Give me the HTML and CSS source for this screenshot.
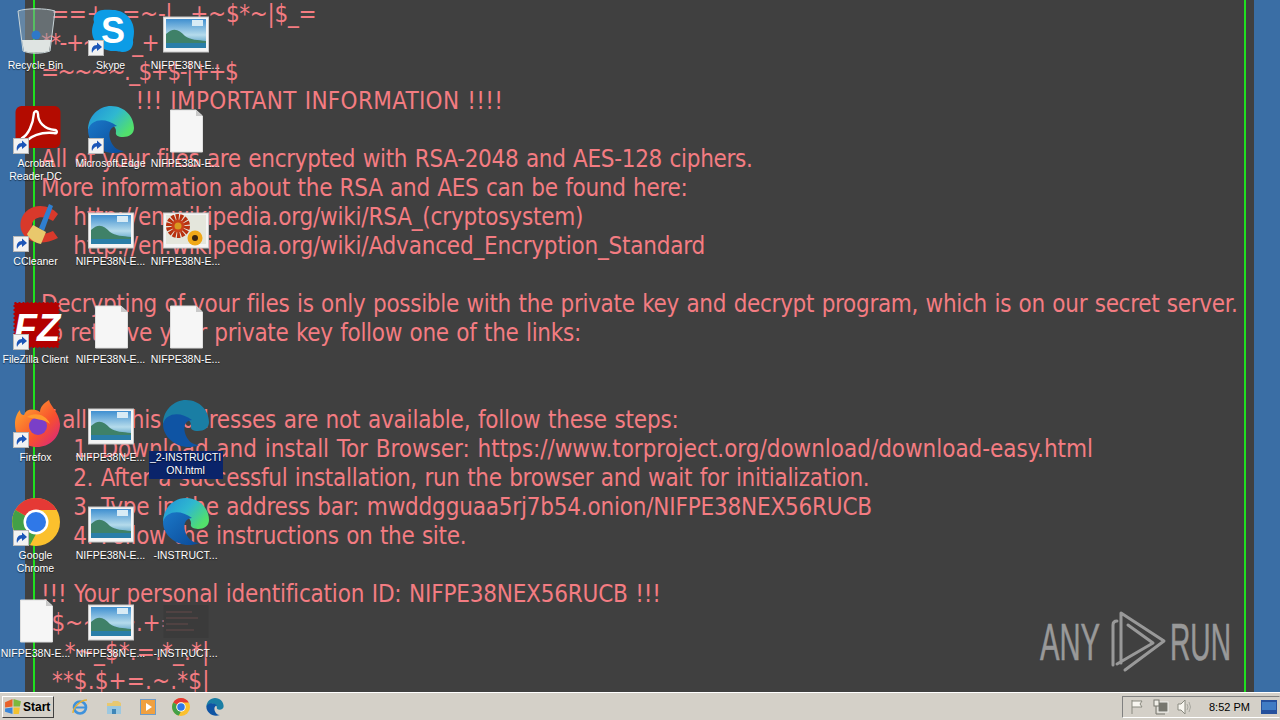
FILE: index.html
```html
<!DOCTYPE html>
<html lang="en">
<head>
<meta charset="utf-8">
<title>Desktop</title>
<link rel="stylesheet" href="styles.css">
</head>
<body>
<svg class="defs" width="0" height="0" aria-hidden="true">
  <defs>
    <linearGradient id="sky" x1="0" y1="0" x2="0" y2="1"><stop offset="0" stop-color="#3f8fd0"/><stop offset="0.55" stop-color="#b5dbeb"/><stop offset="1" stop-color="#2f86b5"/></linearGradient>
    <linearGradient id="edgeA" x1="0" y1="0" x2="1" y2="0.6"><stop offset="0" stop-color="#1f8fd8"/><stop offset="0.55" stop-color="#2fb8d0"/><stop offset="1" stop-color="#52e06c"/></linearGradient>
    <linearGradient id="edgeB" x1="0" y1="0" x2="1" y2="1"><stop offset="0" stop-color="#1a78c8"/><stop offset="1" stop-color="#0c4a98"/></linearGradient>
    <linearGradient id="fox" x1="0" y1="0" x2="1" y2="1"><stop offset="0" stop-color="#ffb52e"/><stop offset="0.6" stop-color="#f8502e"/><stop offset="1" stop-color="#d4208a"/></linearGradient>
    <symbol id="arrow" viewBox="0 0 16 16"><rect x="0.5" y="0.5" width="15" height="15" fill="#f2f2f2" stroke="#b8b8b8"/><path d="M4 13 C3 8 5 5 9 5 L9 2.5 L14 7 L9 11 L9 8.5 C7 8.5 5.500 10 4 13Z" fill="#1c56b8"/></symbol>
    <symbol id="photo" viewBox="0 0 48 48"><rect x="1.500" y="9" width="45" height="35" fill="#f4f4f4" stroke="#c8c8c8"/><rect x="4" y="11" width="40" height="29" fill="url(#sky)"/><path d="M4 26 C11 19 17 21 23 28 C28 32 36 32 44 33 L44 35 L4 35Z" fill="#3f8168"/><path d="M4 35 H44 V40 H4Z" fill="#2a7ea8"/><path d="M30 12 h11 v6 h-11z" fill="#d8ebf5"/></symbol>
    <symbol id="flower" viewBox="0 0 48 48"><rect x="1.500" y="9" width="45" height="35" fill="#f4f4f4" stroke="#c8c8c8"/><rect x="4" y="11" width="40" height="29" fill="#e4e6dc"/><circle cx="16" cy="22" r="9" fill="none" stroke="#b8300f" stroke-width="6" stroke-dasharray="3 1"/><circle cx="16" cy="22" r="6.500" fill="#c8401a"/><circle cx="16" cy="22" r="3.500" fill="#d89820"/><circle cx="33" cy="34" r="7.500" fill="#f0a818"/><circle cx="33" cy="34" r="3" fill="#3a2510"/></symbol>
    <symbol id="doc" viewBox="0 0 48 48"><path d="M8.500 4 H34 L40.500 10 V46 H8.500Z" fill="#f6f6f6" stroke="#dedede"/><path d="M34 4 V10 H40.500Z" fill="#c9c9c9"/></symbol>
    <symbol id="edge" viewBox="0 0 48 48"><path d="M1 24 C1 10 12 0 24 0 C38 0 47 11 47 22 C47 28 42 31 36 31 C31 31 28 29 29 26 C30 17 12 10 4 22Z" fill="url(#edgeA)"/><path d="M1 24 C4 13 18 11 30 20 C24 20 21 26 23 33 C25 40 30 45 37 45 C20 52 1 40 1 24Z" fill="url(#edgeB)"/></symbol>
    <symbol id="edgeFlat" viewBox="0 0 48 48"><path d="M1 24 C1 10 12 0 24 0 C38 0 47 11 47 22 C47 28 42 31 36 31 C31 31 28 29 29 26 C30 17 12 10 4 22Z" fill="#1a7ea4"/><path d="M1 24 C4 13 18 11 30 20 C24 20 21 26 23 33 C25 40 30 45 37 45 C20 52 1 40 1 24Z" fill="#0f54a4"/></symbol>
    <symbol id="chrome" viewBox="0 0 48 48"><circle cx="24" cy="24" r="24" fill="#fbc02d"/><path d="M24 0 A24 24 0 0 1 44.800 12 H24 A12 12 0 0 0 13.600 18 L3.200 12 A24 24 0 0 1 24 0Z" fill="#e53935"/><path d="M3.200 12 L13.600 18 A12 12 0 0 0 24 36 L18 46.900 A24 24 0 0 1 3.200 12Z" fill="#43a047"/><circle cx="24" cy="24" r="12.500" fill="#fff"/><circle cx="24" cy="24" r="10" fill="#2f78e8"/></symbol>
  </defs>
</svg>

<main class="window">
  <div class="frame">
<pre class="note"><span class="l1">==+_-=~-| _+~$*~|$_=</span>
<span class="sym">**-+~~~_+ </span>
<span class="sym">=~~~~._$+$-|++$</span>
<span class="heading">            !!! IMPORTANT INFORMATION !!!!</span>

All of your files are encrypted with RSA-2048 and AES-128 ciphers.
More information about the RSA and AES can be found here:
<span class="in">    </span><span class="loose">http://en.wikipedia.org/wiki/RSA_(cryptosystem)</span>
<span class="in">    </span><span class="loose">http://en.wikipedia.org/wiki/Advanced_Encryption_Standard</span>

Decrypting of your files is only possible with the private key and decrypt program, which is on our secret server.
To retrieve your private key follow one of the links:


<span class="loose">If all of this addresses are not available, follow these steps:</span>
<span class="in">    </span><span class="looser">1. Download and install Tor Browser: https://www.torproject.org/download/download-easy.html</span>
<span class="in">    </span>2. After a successful installation, run the browser and wait for initialization.
<span class="in">    </span><span class="loose">3. Type in the address bar: mwddgguaa5rj7b54.onion/NIFPE38NEX56RUCB</span>
<span class="in">    </span>4. Follow the instructions on the site.

<span class="loose">!!! Your personal identification ID: NIFPE38NEX56RUCB !!!</span>
_$~~~~.+=
<span class="garbage">   *~_$*.=.*_.*|</span>
<span class="garbage">_**$.$+=.~.*$|</span></pre>
  </div>
  <svg class="brand" width="200" height="70" viewBox="0 0 200 70">
    <text x="4" y="55" class="brand-text" textLength="60" lengthAdjust="spacingAndGlyphs">ANY</text>
    <path d="M81 16 Q77 16 77 20 V60 M85 58 V8 L128 36 L89 65 M92 20 L117 38 L81 59" fill="none" stroke="#999" stroke-width="3" stroke-linejoin="round" stroke-linecap="round"/>
    <text x="134" y="55" class="brand-text" textLength="61" lengthAdjust="spacingAndGlyphs">RUN</text>
  </svg>
</main>

<section class="desktop">
  <div class="item"><svg class="ico" viewBox="0 0 48 48"><path d="M6 3 C14 0 34 0 43 3 L38 43 C30 46 18 46 11 43Z" fill="#8d9ea6" fill-opacity=".5" stroke="#c8d4d8"/><path d="M10 32 L39 32 L37 43 C30 45 18 45 12 43Z" fill="#dfe4e2"/><circle cx="24" cy="27" r="4.500" fill="#2e78c8"/></svg><span class="label">Recycle Bin</span></div>
  <div class="item"><svg class="ico" viewBox="0 0 48 48"><path d="M16 2 C19 1.500 22 2 26 2 C37 2 47 11 47 23 C47 27 46.500 29 46 32 C47 39 43 44 36 44 C33 44 31 43 26 43 C15 43 5 34 5 23 C5 20 6 17 7 14 C5 8 10 2 16 2Z" fill="#0c9ce6"/><text x="26" y="35" class="skype-s">S</text></svg><svg class="badge" viewBox="0 0 16 16"><use href="#arrow"/></svg><span class="label">Skype</span></div>
  <div class="item"><svg class="ico"><use href="#photo"/></svg><span class="label">NIFPE38N-E...</span></div>

  <div class="item"><svg class="ico" viewBox="0 0 48 48"><rect x="3.500" y="0" width="45" height="42" rx="6" fill="#b30b00"/><path d="M10 32 C16 29 21 19 22 7 C23 4 26 5 26 8 C26 16 32 23 43 24 C46 25 45 28 42 27 C32 26 22 28 14 35 C10 38 8 34 10 32Z" fill="none" stroke="#fff" stroke-width="2.400"/></svg><svg class="badge" viewBox="0 0 16 16"><use href="#arrow"/></svg><span class="label">Acrobat<br>Reader DC</span></div>
  <div class="item"><svg class="ico"><use href="#edge"/></svg><svg class="badge" viewBox="0 0 16 16"><use href="#arrow"/></svg><span class="label wide">Microsoft Edge</span></div>
  <div class="item"><svg class="ico"><use href="#doc"/></svg><span class="label">NIFPE38N-E...</span></div>

  <div class="item"><svg class="ico" viewBox="0 0 48 48"><path d="M46 10 C36 -2 14 -1 9 16 C5 32 22 46 46 34 L41 27 C28 33 18 29 20 20 C22 12 32 11 41 17Z" fill="#d8392b"/><path d="M27 24 L37 0 L41 2 L32 27Z" fill="#2f7fd0"/><path d="M21 21 L34 28 L29 40 C23 39 17 35 15 30Z" fill="#e9c86c"/></svg><svg class="badge" viewBox="0 0 16 16"><use href="#arrow"/></svg><span class="label">CCleaner</span></div>
  <div class="item"><svg class="ico"><use href="#photo"/></svg><span class="label">NIFPE38N-E...</span></div>
  <div class="item"><svg class="ico"><use href="#flower"/></svg><span class="label">NIFPE38N-E...</span></div>

  <div class="item"><svg class="ico" viewBox="0 0 48 48"><rect x="2.500" y="1" width="44" height="44" fill="#b30000" stroke="#b30000" stroke-width="2" stroke-dasharray="2 2"/><text x="25" y="39" class="fz">FZ</text></svg><svg class="badge" viewBox="0 0 16 16"><use href="#arrow"/></svg><span class="label">FileZilla Client</span></div>
  <div class="item"><svg class="ico"><use href="#doc"/></svg><span class="label">NIFPE38N-E...</span></div>
  <div class="item"><svg class="ico"><use href="#doc"/></svg><span class="label">NIFPE38N-E...</span></div>

  <div class="item"><svg class="ico" viewBox="0 0 48 48"><path d="M37 0 C38 6 47 12 48 24 C48 38 37 47 25 47 C12 47 3 37 3 24 C3 18 5 13 8 10 C8 14 10 15 12 15 C14 9 21 8 28 12 C28 7 32 3 37 0Z" fill="url(#fox)"/><circle cx="26" cy="26" r="9" fill="#7a3fc8"/><path d="M15 17 C22 12 34 14 38 24 C32 19 22 19 15 17Z" fill="#ff9a2e"/></svg><svg class="badge" viewBox="0 0 16 16"><use href="#arrow"/></svg><span class="label">Firefox</span></div>
  <div class="item"><svg class="ico"><use href="#photo"/></svg><span class="label">NIFPE38N-E...</span></div>
  <div class="item"><svg class="ico"><use href="#edgeFlat"/></svg><span class="label selected">_2-INSTRUCTION.html</span></div>

  <div class="item"><svg class="ico"><use href="#chrome"/></svg><svg class="badge" viewBox="0 0 16 16"><use href="#arrow"/></svg><span class="label">Google Chrome</span></div>
  <div class="item"><svg class="ico"><use href="#photo"/></svg><span class="label">NIFPE38N-E...</span></div>
  <div class="item"><svg class="ico"><use href="#edge"/></svg><span class="label">-INSTRUCT...</span></div>

  <div class="item"><svg class="ico"><use href="#doc"/></svg><span class="label">NIFPE38N-E...</span></div>
  <div class="item"><svg class="ico"><use href="#photo"/></svg><span class="label">NIFPE38N-E...</span></div>
  <div class="item"><svg class="ico" viewBox="0 0 48 48"><rect x="1.500" y="9" width="45" height="33" fill="#3b3b3b"/><path d="M4 16 H30 M4 22 H36 M4 28 H26 M4 34 H32" stroke="#584545" stroke-width="1.500"/></svg><span class="label">-INSTRUCT...</span></div>
</section>

<footer class="taskbar">
  <button class="start"><svg class="flag" width="18" height="17" viewBox="0 0 17 16"><path d="M1 4 L8 1 L8 8 L1 9Z" fill="#e8622a"/><path d="M9 1 L16 3 L15 8 L9 8Z" fill="#7cb83c"/><path d="M1 10 L8 9 L8 15 L1 13Z" fill="#3a86d8"/><path d="M9 9 L15 9 L14 15 L9 15Z" fill="#f2c230"/></svg><span>Start</span></button>
  <div class="quick">
    <svg width="18" height="18" viewBox="0 0 18 18"><circle cx="9" cy="9.500" r="6" fill="none" stroke="#3f92dc" stroke-width="2.600"/><path d="M4 9.500 H14" stroke="#3f92dc" stroke-width="2"/><path d="M2 15 C2 9 10 2 16 2" fill="none" stroke="#e8b030" stroke-width="1.400"/></svg>
    <svg width="18" height="18" viewBox="0 0 18 18"><path d="M2 5 H7 L8 3 H13 L16 5 V16 H2Z" fill="#e8c870"/><path d="M2 8 H16 V16 H2Z" fill="#9cc8e0"/><path d="M7 16 V11 H11 V16Z" fill="#3f86b8"/></svg>
    <svg width="18" height="18" viewBox="0 0 18 18"><rect x="1.500" y="1.500" width="15" height="15" fill="#f0a040" stroke="#6f9cc8"/><path d="M7 5 L13 9 L7 13Z" fill="#fff"/></svg>
    <svg width="18" height="18"><use href="#chrome"/></svg>
    <svg width="18" height="18"><use href="#edgeFlat"/></svg>
  </div>
  <div class="tray">
    <svg width="16" height="16" viewBox="0 0 16 16"><path d="M3 1 V15 M3 2 H13 L11 5 L13 8 H3" fill="#f8f6f0" stroke="#8a8a80"/></svg>
    <svg width="16" height="16" viewBox="0 0 16 16"><rect x="5" y="3" width="10" height="10" fill="#77776f" stroke="#f4f4f0"/><rect x="1" y="1" width="5" height="6" fill="#f1efe8" stroke="#77776f"/><path d="M3 7 V15 H12" fill="none" stroke="#77776f"/></svg>
    <svg width="16" height="16" viewBox="0 0 16 16"><path d="M1 5 H4 L8 1 V15 L4 11 H1Z" fill="#f8f6f0" stroke="#8a8a80"/><path d="M10 5 Q12 8 10 11 M12 3 Q15 8 12 13" fill="none" stroke="#a8a8a0"/></svg>
    <time class="clock">8:52 PM</time>
    <svg class="monitor" width="16" height="14" viewBox="0 0 16 14"><rect width="16" height="14" fill="#24509c"/><rect x="1" y="2" width="14" height="8" fill="#3f7cc4"/></svg>
  </div>
</footer>
</body>
</html>
```
FILE: styles.css
```css
* { box-sizing: border-box; }
html, body { margin: 0; height: 100%; overflow: hidden; }
body {
  position: relative;
  width: 1280px;
  height: 720px;
  background: #3a6ea5;
  display: flex;
  flex-direction: column;
  font-family: "Liberation Sans", Arial, sans-serif;
}
.defs { position: absolute; }

.window {
  position: relative;
  flex: 1;
  min-height: 0;
  margin: 0 26px 0 25px;
  padding: 0 8px;
  background: #404040;
  overflow: hidden;
}
.frame {
  height: 100%;
  padding-left: 6px;
  border-left: 2px solid #1fe01f;
  border-right: 2px solid #1fe01f;
  overflow: hidden;
}
.note {
  margin: 0;
  font-family: "DejaVu Sans", sans-serif;
  font-stretch: condensed;
  font-size: 24px;
  letter-spacing: -.31px;
  word-spacing: .95px;
  line-height: 29px;
  color: #f47c82;
  white-space: pre;
}
.l1 { margin-left: 10px; }
.sym { letter-spacing: -1.5px; word-spacing: 0; }
.in { word-spacing: 1.5px; }
.heading { letter-spacing: .32px; word-spacing: .7px; }
.loose { letter-spacing: -.2px; }
.looser { letter-spacing: -.03px; }
.garbage { letter-spacing: .15px; }

.brand { position: absolute; right: 18px; bottom: 17px; }
.brand-text {
  font-family: "Liberation Sans", sans-serif;
  font-size: 52px;
  fill: #999;
  stroke: #999;
  stroke-width: .6px;
}

.desktop {
  position: absolute;
  top: 0;
  left: -2px;
  display: grid;
  grid-template-columns: repeat(3, 75px);
  grid-template-rows: repeat(7, 98px);
}
.item {
  position: relative;
  display: flex;
  flex-direction: column;
  align-items: center;
  padding-top: 8px;
}
.ico { width: 48px; height: 48px; flex: none; overflow: visible; }
.badge { position: absolute; width: 16px; height: 16px; top: 40px; left: 15px; }
.label {
  margin-top: 3px;
  width: 74px;
  color: #fff;
  font-size: 10.5px;
  line-height: 13px;
  text-align: center;
  text-shadow: 0 1px 1px rgba(0,0,0,.6);
  overflow-wrap: anywhere;
}
.label.wide { width: 80px; white-space: nowrap; margin-inline: -3px; }
.label.selected { background: #0a246a; padding-bottom: 2px; word-break: break-all; }
.skype-s { font: 700 36px "Liberation Sans", sans-serif; fill: #fff; text-anchor: middle; }
.fz { font: italic 700 38px "Liberation Sans", sans-serif; fill: #fff; text-anchor: middle; }

.taskbar {
  flex: none;
  height: 28px;
  background: #d4d0c8;
  border-top: 1px solid #fff;
  display: flex;
  align-items: center;
  padding: 0 0 0 2px;
}
.start {
  width: 52px;
  height: 22px;
  padding: 0 0 0 1px;
  display: flex;
  align-items: center;
  gap: 1px;
  background: #d4d0c8;
  border: 1px solid;
  border-color: #fff #404040 #404040 #fff;
  font: 700 12px "Liberation Sans", sans-serif;
  color: #000;
}
.quick { display: flex; gap: 15.8px; margin-left: 17px; }
.tray {
  margin-left: auto;
  width: 158px;
  height: 22px;
  display: flex;
  align-items: center;
  gap: 8px;
  padding-left: 6px;
  border: 1px solid;
  border-color: #808080 #d4d0c8 #fff #808080;
}
.tray svg { flex: none; }
.clock { margin-left: 8px; width: 44px; flex: none; font-size: 11px; color: #000; white-space: nowrap; }
```
